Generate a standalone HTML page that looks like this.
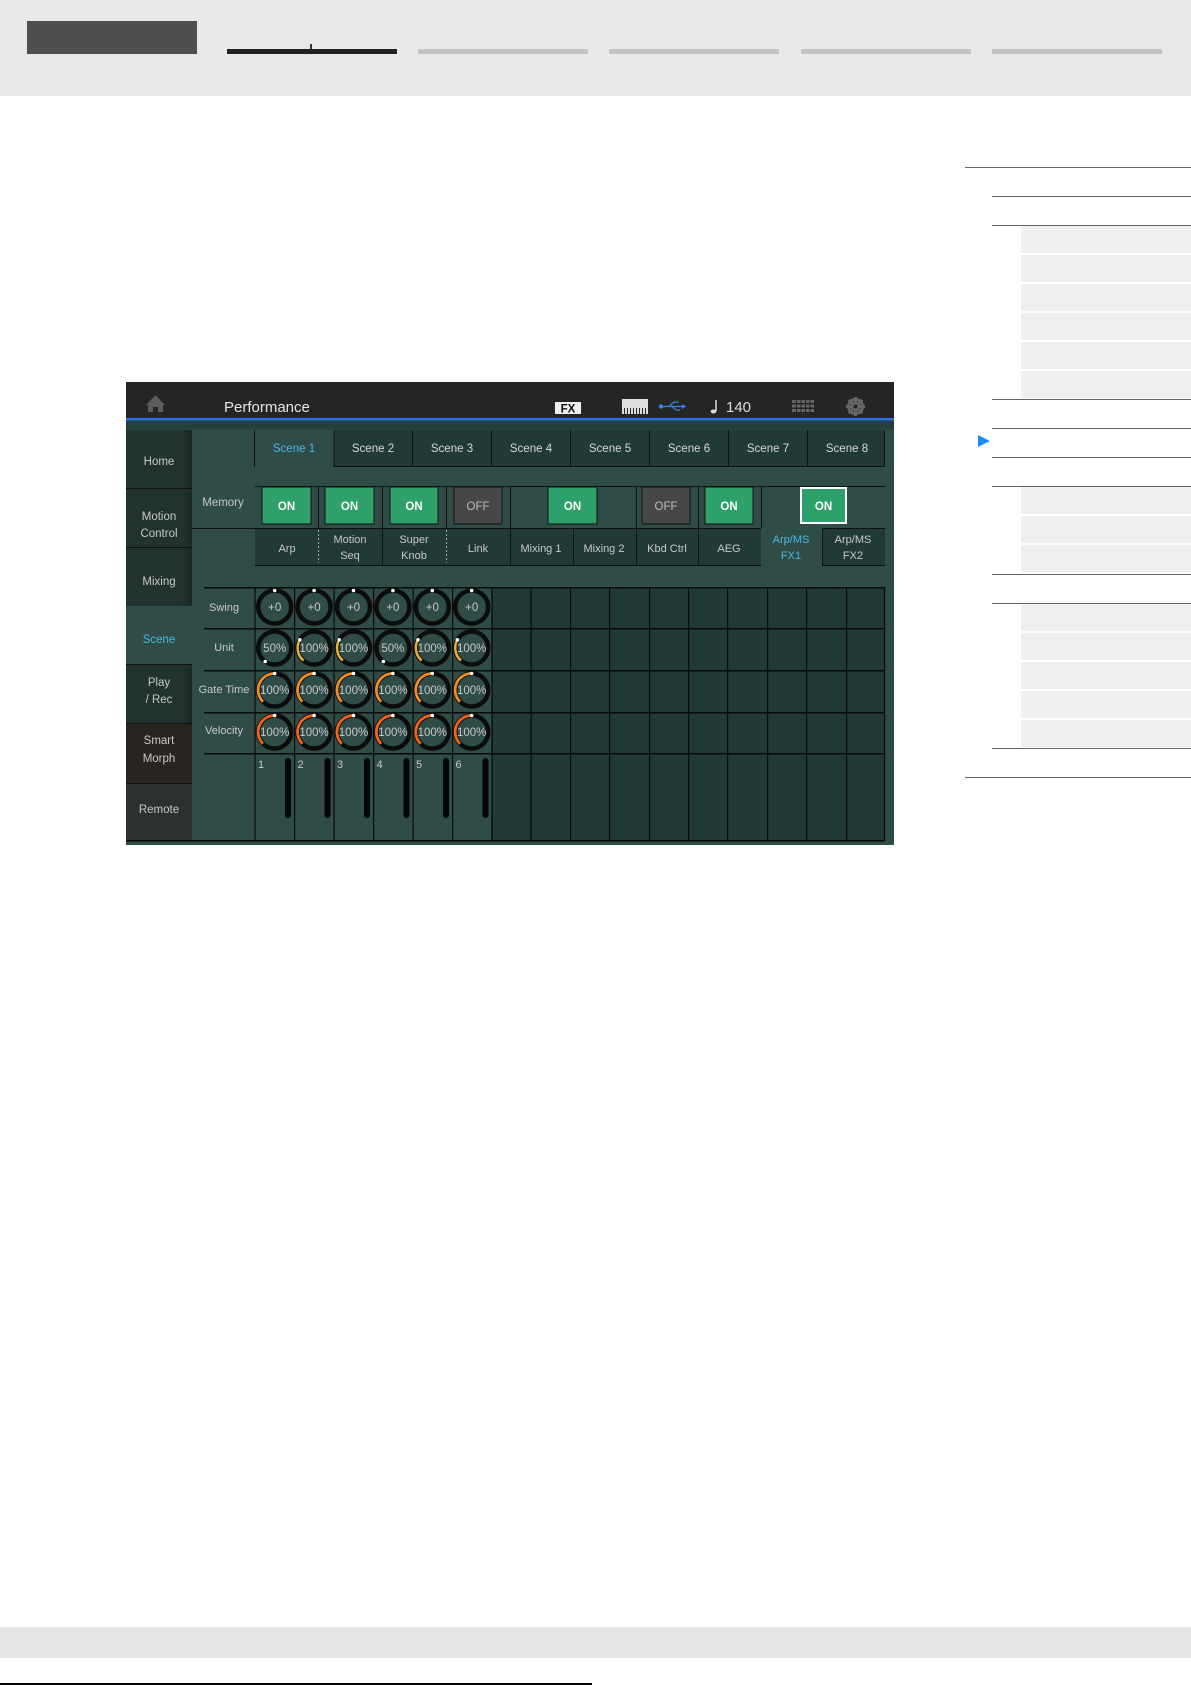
<!DOCTYPE html>
<html><head><meta charset="utf-8">
<style>
html,body{margin:0;padding:0;background:#fff;}
body{width:1191px;height:1685px;position:relative;overflow:hidden;font-family:"Liberation Sans",sans-serif;}
.a{position:absolute;}
.hl{position:absolute;height:1px;background:#666;}
.gb{position:absolute;left:1021px;width:170px;height:27px;background:#efefef;}
</style></head><body>
<div class="a" style="left:0;top:0;width:1191px;height:96px;background:#e8e8e8"></div>
<div class="a" style="left:27px;top:21px;width:170px;height:33px;background:#4f4e4e"></div>
<div class="a" style="left:227px;top:49px;width:170px;height:5px;background:#222"></div>
<div class="a" style="left:310px;top:44px;width:2px;height:5px;background:#333"></div>
<div class="a" style="left:418px;top:49px;width:170px;height:5px;background:#c4c4c4"></div>
<div class="a" style="left:609px;top:49px;width:170px;height:5px;background:#c4c4c4"></div>
<div class="a" style="left:801px;top:49px;width:170px;height:5px;background:#c4c4c4"></div>
<div class="a" style="left:992px;top:49px;width:170px;height:5px;background:#c4c4c4"></div>

<!-- right list -->
<div class="hl" style="left:965px;top:167px;width:226px"></div>
<div class="hl" style="left:992px;top:196px;width:199px"></div>
<div class="hl" style="left:992px;top:225px;width:199px"></div>
<div class="gb" style="top:226px"></div>
<div class="gb" style="top:255px"></div>
<div class="gb" style="top:284px"></div>
<div class="gb" style="top:313px"></div>
<div class="gb" style="top:342px"></div>
<div class="gb" style="top:371px"></div>
<div class="hl" style="left:992px;top:399px;width:199px"></div>
<div class="hl" style="left:992px;top:428px;width:199px"></div>
<div class="a" style="left:978px;top:435px;width:0;height:0;border-top:6.5px solid transparent;border-bottom:6.5px solid transparent;border-left:12px solid #1a8cff"></div>
<div class="hl" style="left:992px;top:457px;width:199px"></div>
<div class="hl" style="left:992px;top:486px;width:199px"></div>
<div class="gb" style="top:487px"></div>
<div class="gb" style="top:516px"></div>
<div class="gb" style="top:545px"></div>
<div class="hl" style="left:992px;top:574px;width:199px"></div>
<div class="hl" style="left:992px;top:603px;width:199px"></div>
<div class="gb" style="top:604px"></div>
<div class="gb" style="top:633px"></div>
<div class="gb" style="top:662px"></div>
<div class="gb" style="top:691px"></div>
<div class="gb" style="top:720px"></div>
<div class="hl" style="left:992px;top:748px;width:199px"></div>
<div class="hl" style="left:965px;top:777px;width:226px"></div>

<!-- footer -->
<div class="a" style="left:0;top:1627px;width:1191px;height:31px;background:#e5e5e5"></div>
<div class="a" style="left:0;top:1683px;width:592px;height:2px;background:#000"></div>

<!-- screen -->
<svg class="a" style="left:126px;top:382px" width="768" height="463" viewBox="0 0 768 463" font-family="Liberation Sans, sans-serif">
<defs>
<linearGradient id="lt" x1="0" x2="1"><stop offset="0" stop-color="#22332f"/><stop offset="0.85" stop-color="#22332f"/><stop offset="1" stop-color="#1a2624"/></linearGradient>
</defs>
<rect width="768" height="463" fill="#2f4c47"/>
<rect width="768" height="36" fill="#232624"/>
<rect y="36" width="768" height="2.5" fill="#2a6cf0"/>
<rect y="38.5" width="768" height="9" fill="#23403b"/>
<path d="M20 23 L29.5 13 L39 23 L37 23 L37 30 L32 30 L32 25 L27 25 L27 30 L22 30 L22 23 Z" fill="#5a5d5b"/>
<text x="98" y="30" font-size="15" fill="#e6e6e6">Performance</text>
<rect x="429" y="20" width="26" height="12" fill="#eee"/>
<text x="442" y="30.5" font-size="11.5" font-weight="bold" fill="#111" text-anchor="middle">FX</text>
<rect x="496" y="17" width="26" height="15" fill="#ddd"/>
<g fill="#232624"><rect x="498" y="26" width="1" height="6"/><rect x="501" y="26" width="1" height="6"/><rect x="504" y="26" width="1" height="6"/><rect x="507" y="26" width="1" height="6"/><rect x="510" y="26" width="1" height="6"/><rect x="513" y="26" width="1" height="6"/><rect x="516" y="26" width="1" height="6"/><rect x="519" y="26" width="1" height="6"/></g>
<g stroke="#3a80e0" stroke-width="1.3" fill="none"><path d="M535 24.5 H559"/><path d="M543 24.5 L548 20 H553"/><path d="M546 24.5 L550 28 H554"/></g>
<circle cx="535" cy="24.5" r="2.2" fill="#3a80e0"/><path d="M556 22 L560 24.5 L556 27Z" fill="#3a80e0"/>
<path d="M590 18 V29" stroke="#ddd" stroke-width="1.5"/><ellipse cx="587.5" cy="29.5" rx="2.8" ry="2" fill="#ddd"/>
<text x="600" y="30" font-size="15" fill="#ddd">140</text>
<g fill="#666"><rect x="666" y="18" width="22" height="3"/><rect x="666" y="22.5" width="22" height="3"/><rect x="666" y="27" width="22" height="3"/></g>
<g stroke="#232624" stroke-width="1"><path d="M670.5 18V30M675 18V30M679.5 18V30M684 18V30"/></g>
<circle cx="729.5" cy="24.5" r="7" fill="none" stroke="#666" stroke-width="3"/>
<g stroke="#666" stroke-width="3"><path d="M729.5 15V34M720 24.5H739M722.8 17.8L736.2 31.2M736.2 17.8L722.8 31.2"/></g>
<circle cx="729.5" cy="24.5" r="4" fill="#666"/><circle cx="729.5" cy="24.5" r="2" fill="#232624"/>

<g font-size="11.5" fill="#c8c8c8" text-anchor="middle">
<rect x="0" y="48" width="66" height="58" fill="url(#lt)"/>
<rect x="0" y="106" width="66" height="1" fill="#111"/>
<rect x="0" y="107" width="66" height="58" fill="url(#lt)"/>
<rect x="0" y="165" width="66" height="1" fill="#111"/>
<rect x="0" y="166" width="66" height="58" fill="url(#lt)"/>
<rect x="0" y="224" width="66" height="58" fill="#2f4c47"/>
<rect x="0" y="282" width="66" height="1" fill="#111"/>
<rect x="0" y="283" width="66" height="58" fill="url(#lt)"/>
<rect x="0" y="341" width="66" height="1" fill="#111"/>
<rect x="0" y="342" width="66" height="59" fill="#2a2420"/>
<rect x="0" y="401" width="66" height="1" fill="#111"/>
<rect x="0" y="402" width="66" height="57" fill="#2a312e"/>
<text x="33" y="83">Home</text>
<text x="33" y="138">Motion</text><text x="33" y="155">Control</text>
<text x="33" y="203">Mixing</text>
<text x="33" y="261" fill="#4ab8e8">Scene</text>
<text x="33" y="304">Play</text><text x="33" y="321">/ Rec</text>
<text x="33" y="362">Smart</text><text x="33" y="380">Morph</text>
<text x="33" y="431">Remote</text>
</g>

<g font-size="11.5" fill="#d8d8d8" text-anchor="middle">
<rect x="129" y="48" width="630" height="36" fill="#223a36"/>
<rect x="129" y="48" width="79" height="37" fill="#2f4c47"/>
<rect x="208" y="84" width="551" height="1" fill="#111"/>
<g fill="#111"><rect x="207.5" y="48" width="1" height="37"/><rect x="286" y="48" width="1" height="37"/><rect x="365" y="48" width="1" height="37"/><rect x="444" y="48" width="1" height="37"/><rect x="523" y="48" width="1" height="37"/><rect x="602" y="48" width="1" height="37"/><rect x="681" y="48" width="1" height="37"/><rect x="128" y="48" width="1" height="37"/><rect x="758" y="48" width="1" height="37"/></g>
<text x="168" y="70" fill="#4ab8e8">Scene 1</text>
<text x="247" y="70">Scene 2</text>
<text x="326" y="70">Scene 3</text>
<text x="405" y="70">Scene 4</text>
<text x="484" y="70">Scene 5</text>
<text x="563" y="70">Scene 6</text>
<text x="642" y="70">Scene 7</text>
<text x="721" y="70">Scene 8</text>
</g>
<rect x="759" y="48" width="9" height="415" fill="#2f4c47"/>

<rect x="129" y="104" width="630" height="42" fill="#2f4c47"/>
<rect x="129" y="104" width="630" height="1" fill="#111"/>
<g fill="#111"><rect x="192" y="104" width="1" height="42"/><rect x="256" y="104" width="1" height="42"/><rect x="320" y="104" width="1" height="42"/><rect x="384" y="104" width="1" height="42"/><rect x="510" y="104" width="1" height="42"/><rect x="572" y="104" width="1" height="42"/><rect x="635" y="104" width="1" height="42"/></g>
<text x="97" y="124" font-size="11.5" fill="#c8c8c8" text-anchor="middle">Memory</text>
<g font-size="11.5" font-weight="bold" fill="#fff" text-anchor="middle">
<rect x="136" y="105" width="49" height="37" fill="#2ea16a" stroke="#111"/><text x="160.5" y="128">ON</text>
<rect x="199" y="105" width="49" height="37" fill="#2ea16a" stroke="#111"/><text x="223.5" y="128">ON</text>
<rect x="264" y="105" width="48" height="37" fill="#2ea16a" stroke="#111"/><text x="288" y="128">ON</text>
<rect x="328" y="105" width="48" height="37" fill="#464848" stroke="#111"/><text x="352" y="128" fill="#bbb" font-weight="normal">OFF</text>
<rect x="422" y="105" width="49" height="37" fill="#2ea16a" stroke="#111"/><text x="446.5" y="128">ON</text>
<rect x="516" y="105" width="48" height="37" fill="#464848" stroke="#111"/><text x="540" y="128" fill="#bbb" font-weight="normal">OFF</text>
<rect x="579" y="105" width="48" height="37" fill="#2ea16a" stroke="#111"/><text x="603" y="128">ON</text>
<rect x="675" y="106" width="45" height="35" fill="#2ea16a" stroke="#fff" stroke-width="2"/><text x="697.5" y="128">ON</text>
</g>

<rect x="129" y="146" width="630" height="37" fill="#223a36"/>
<rect x="66" y="146" width="693" height="1" fill="#111"/>
<rect x="635" y="146" width="61" height="38" fill="#2f4c47"/>
<rect x="129" y="183" width="506" height="1" fill="#111"/>
<rect x="696" y="183" width="63" height="1" fill="#111"/>
<g fill="#111"><rect x="256" y="146" width="1" height="37"/><rect x="384" y="146" width="1" height="37"/><rect x="447" y="146" width="1" height="37"/><rect x="510" y="146" width="1" height="37"/><rect x="572" y="146" width="1" height="37"/><rect x="696" y="146" width="1" height="38"/></g>
<g stroke="#aaa" stroke-width="1" stroke-dasharray="2,2"><path d="M192.5 148V181M320.5 148V181"/></g>
<g font-size="11" fill="#c8c8c8" text-anchor="middle">
<text x="161" y="170">Arp</text>
<text x="224" y="161">Motion</text><text x="224" y="177">Seq</text>
<text x="288" y="161">Super</text><text x="288" y="177">Knob</text>
<text x="352" y="170">Link</text>
<text x="415" y="170">Mixing 1</text>
<text x="478" y="170">Mixing 2</text>
<text x="541" y="170">Kbd Ctrl</text>
<text x="603" y="170">AEG</text>
<text x="665" y="161" fill="#4ab8e8">Arp/MS</text><text x="665" y="177" fill="#4ab8e8">FX1</text>
<text x="727" y="161">Arp/MS</text><text x="727" y="177">FX2</text>
</g>

<rect x="129" y="205" width="630" height="254" fill="#223a37"/>
<rect x="129" y="205" width="236" height="254" fill="#2f4c47"/>
<g fill="#0a0a0a">
<rect x="78" y="205" width="681" height="1.5"/>
<rect x="78" y="246" width="681" height="1.5"/>
<rect x="78" y="288" width="681" height="1.5"/>
<rect x="78" y="330" width="681" height="1.5"/>
<rect x="78" y="371" width="681" height="1.5"/>
<rect x="0" y="458" width="759" height="1.5"/>
</g>
<g fill="#0a0a0a">
<rect x="128.5" y="205" width="1.2" height="254"/><rect x="168" y="205" width="1.2" height="254"/><rect x="207.5" y="205" width="1.2" height="254"/><rect x="247" y="205" width="1.2" height="254"/><rect x="286.5" y="205" width="1.2" height="254"/><rect x="326" y="205" width="1.2" height="254"/><rect x="365.5" y="205" width="1.2" height="254"/><rect x="404.5" y="205" width="1.2" height="254"/><rect x="444" y="205" width="1.2" height="254"/><rect x="483" y="205" width="1.2" height="254"/><rect x="523" y="205" width="1.2" height="254"/><rect x="562" y="205" width="1.2" height="254"/><rect x="601" y="205" width="1.2" height="254"/><rect x="641" y="205" width="1.2" height="254"/><rect x="680" y="205" width="1.2" height="254"/><rect x="720" y="205" width="1.2" height="254"/><rect x="758" y="205" width="1.2" height="254"/>
</g>
<g font-size="11" fill="#c8c8c8" text-anchor="middle">
<text x="98" y="229">Swing</text>
<text x="98" y="269">Unit</text>
<text x="98" y="311">Gate Time</text>
<text x="98" y="352">Velocity</text>
</g>

<g fill="none">
<g transform="translate(148.7,225)"><circle r="16.5" stroke="#0c0c0c" stroke-width="4.5"/><circle cy="-16.5" r="1.8" fill="#fff"/></g>
<g transform="translate(188.1,225)"><circle r="16.5" stroke="#0c0c0c" stroke-width="4.5"/><circle cy="-16.5" r="1.8" fill="#fff"/></g>
<g transform="translate(227.5,225)"><circle r="16.5" stroke="#0c0c0c" stroke-width="4.5"/><circle cy="-16.5" r="1.8" fill="#fff"/></g>
<g transform="translate(266.9,225)"><circle r="16.5" stroke="#0c0c0c" stroke-width="4.5"/><circle cy="-16.5" r="1.8" fill="#fff"/></g>
<g transform="translate(306.3,225)"><circle r="16.5" stroke="#0c0c0c" stroke-width="4.5"/><circle cy="-16.5" r="1.8" fill="#fff"/></g>
<g transform="translate(345.7,225)"><circle r="16.5" stroke="#0c0c0c" stroke-width="4.5"/><circle cy="-16.5" r="1.8" fill="#fff"/></g>
<g transform="translate(148.7,266)"><circle r="16.5" stroke="#0c0c0c" stroke-width="4.5"/><circle cx="-9.5" cy="13.5" r="1.8" fill="#fff"/></g>
<g transform="translate(266.9,266)"><circle r="16.5" stroke="#0c0c0c" stroke-width="4.5"/><circle cx="-9.5" cy="13.5" r="1.8" fill="#fff"/></g>
<g transform="translate(188.1,266)"><circle r="16.5" stroke="#0c0c0c" stroke-width="4.5"/><path d="M-14.3 -8.2 A16.5 16.5 0 0 0 -10.6 12.6" stroke="#e8b030" stroke-width="2.5"/><circle cx="-14.3" cy="-8.2" r="1.8" fill="#fff"/></g>
<g transform="translate(227.5,266)"><circle r="16.5" stroke="#0c0c0c" stroke-width="4.5"/><path d="M-14.3 -8.2 A16.5 16.5 0 0 0 -10.6 12.6" stroke="#e8b030" stroke-width="2.5"/><circle cx="-14.3" cy="-8.2" r="1.8" fill="#fff"/></g>
<g transform="translate(306.3,266)"><circle r="16.5" stroke="#0c0c0c" stroke-width="4.5"/><path d="M-14.3 -8.2 A16.5 16.5 0 0 0 -10.6 12.6" stroke="#e8b030" stroke-width="2.5"/><circle cx="-14.3" cy="-8.2" r="1.8" fill="#fff"/></g>
<g transform="translate(345.7,266)"><circle r="16.5" stroke="#0c0c0c" stroke-width="4.5"/><path d="M-14.3 -8.2 A16.5 16.5 0 0 0 -10.6 12.6" stroke="#e8b030" stroke-width="2.5"/><circle cx="-14.3" cy="-8.2" r="1.8" fill="#fff"/></g>
<g transform="translate(148.7,308)"><circle r="16.5" stroke="#0c0c0c" stroke-width="4.5"/><path d="M0 -16.5 A16.5 16.5 0 0 0 -11.7 11.7" stroke="#f08c20" stroke-width="2.8"/><circle cy="-16.5" r="1.8" fill="#fff"/></g>
<g transform="translate(188.1,308)"><circle r="16.5" stroke="#0c0c0c" stroke-width="4.5"/><path d="M0 -16.5 A16.5 16.5 0 0 0 -11.7 11.7" stroke="#f08c20" stroke-width="2.8"/><circle cy="-16.5" r="1.8" fill="#fff"/></g>
<g transform="translate(227.5,308)"><circle r="16.5" stroke="#0c0c0c" stroke-width="4.5"/><path d="M0 -16.5 A16.5 16.5 0 0 0 -11.7 11.7" stroke="#f08c20" stroke-width="2.8"/><circle cy="-16.5" r="1.8" fill="#fff"/></g>
<g transform="translate(266.9,308)"><circle r="16.5" stroke="#0c0c0c" stroke-width="4.5"/><path d="M0 -16.5 A16.5 16.5 0 0 0 -11.7 11.7" stroke="#f08c20" stroke-width="2.8"/><circle cy="-16.5" r="1.8" fill="#fff"/></g>
<g transform="translate(306.3,308)"><circle r="16.5" stroke="#0c0c0c" stroke-width="4.5"/><path d="M0 -16.5 A16.5 16.5 0 0 0 -11.7 11.7" stroke="#f08c20" stroke-width="2.8"/><circle cy="-16.5" r="1.8" fill="#fff"/></g>
<g transform="translate(345.7,308)"><circle r="16.5" stroke="#0c0c0c" stroke-width="4.5"/><path d="M0 -16.5 A16.5 16.5 0 0 0 -11.7 11.7" stroke="#f08c20" stroke-width="2.8"/><circle cy="-16.5" r="1.8" fill="#fff"/></g>
<g transform="translate(148.7,350)"><circle r="16.5" stroke="#0c0c0c" stroke-width="4.5"/><path d="M0 -16.5 A16.5 16.5 0 0 0 -11.7 11.7" stroke="#f06414" stroke-width="2.8"/><circle cy="-16.5" r="1.8" fill="#fff"/></g>
<g transform="translate(188.1,350)"><circle r="16.5" stroke="#0c0c0c" stroke-width="4.5"/><path d="M0 -16.5 A16.5 16.5 0 0 0 -11.7 11.7" stroke="#f06414" stroke-width="2.8"/><circle cy="-16.5" r="1.8" fill="#fff"/></g>
<g transform="translate(227.5,350)"><circle r="16.5" stroke="#0c0c0c" stroke-width="4.5"/><path d="M0 -16.5 A16.5 16.5 0 0 0 -11.7 11.7" stroke="#f06414" stroke-width="2.8"/><circle cy="-16.5" r="1.8" fill="#fff"/></g>
<g transform="translate(266.9,350)"><circle r="16.5" stroke="#0c0c0c" stroke-width="4.5"/><path d="M0 -16.5 A16.5 16.5 0 0 0 -11.7 11.7" stroke="#f06414" stroke-width="2.8"/><circle cy="-16.5" r="1.8" fill="#fff"/></g>
<g transform="translate(306.3,350)"><circle r="16.5" stroke="#0c0c0c" stroke-width="4.5"/><path d="M0 -16.5 A16.5 16.5 0 0 0 -11.7 11.7" stroke="#f06414" stroke-width="2.8"/><circle cy="-16.5" r="1.8" fill="#fff"/></g>
<g transform="translate(345.7,350)"><circle r="16.5" stroke="#0c0c0c" stroke-width="4.5"/><path d="M0 -16.5 A16.5 16.5 0 0 0 -11.7 11.7" stroke="#f06414" stroke-width="2.8"/><circle cy="-16.5" r="1.8" fill="#fff"/></g>
</g>
<g font-size="11.5" fill="#c8c8c8" text-anchor="middle">
<text x="148.7" y="229">+0</text><text x="188.1" y="229">+0</text><text x="227.5" y="229">+0</text><text x="266.9" y="229">+0</text><text x="306.3" y="229">+0</text><text x="345.7" y="229">+0</text>
<text x="148.7" y="270">50%</text><text x="188.1" y="270">100%</text><text x="227.5" y="270">100%</text><text x="266.9" y="270">50%</text><text x="306.3" y="270">100%</text><text x="345.7" y="270">100%</text>
<text x="148.7" y="312">100%</text><text x="188.1" y="312">100%</text><text x="227.5" y="312">100%</text><text x="266.9" y="312">100%</text><text x="306.3" y="312">100%</text><text x="345.7" y="312">100%</text>
<text x="148.7" y="354">100%</text><text x="188.1" y="354">100%</text><text x="227.5" y="354">100%</text><text x="266.9" y="354">100%</text><text x="306.3" y="354">100%</text><text x="345.7" y="354">100%</text>
</g>
<g fill="#050505">
<rect x="159" y="376" width="6" height="60" rx="3"/><rect x="198.5" y="376" width="6" height="60" rx="3"/><rect x="238" y="376" width="6" height="60" rx="3"/><rect x="277.5" y="376" width="6" height="60" rx="3"/><rect x="317" y="376" width="6" height="60" rx="3"/><rect x="356.5" y="376" width="6" height="60" rx="3"/>
</g>
<g font-size="11" fill="#c8c8c8">
<text x="132" y="386">1</text><text x="171.5" y="386">2</text><text x="211" y="386">3</text><text x="250.5" y="386">4</text><text x="290" y="386">5</text><text x="329.5" y="386">6</text>
</g>
</svg>
</body></html>
